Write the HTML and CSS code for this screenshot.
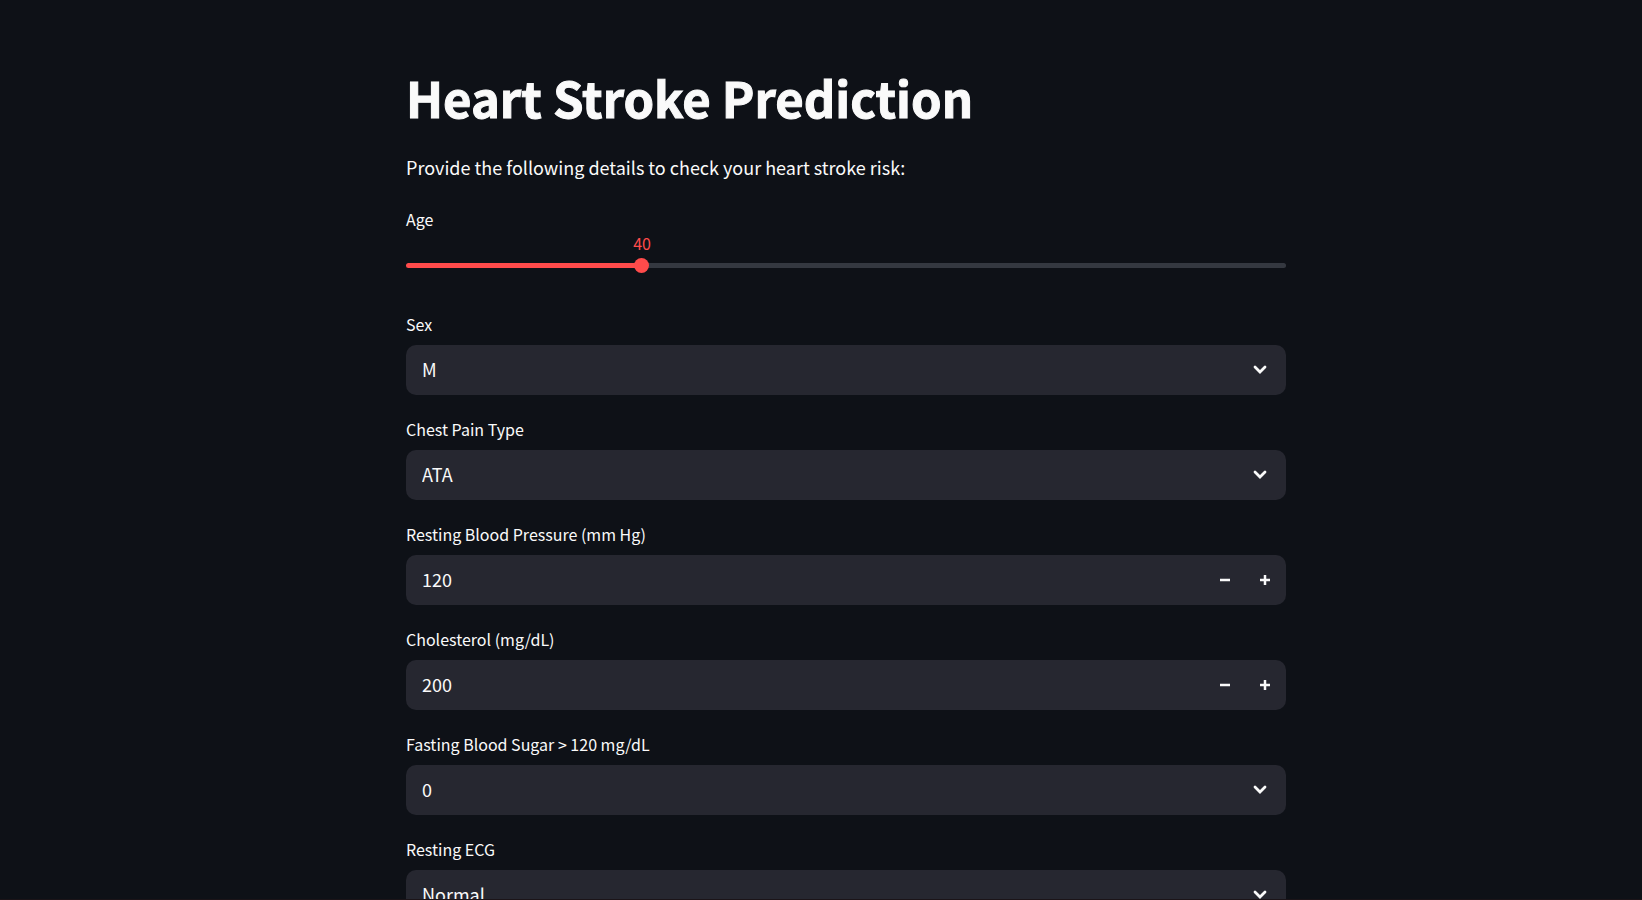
FILE: index.html
```html
<!DOCTYPE html>
<html lang="en">
<head>
<meta charset="utf-8">
<meta name="viewport" content="width=device-width, initial-scale=1">
<title>Heart Stroke Prediction</title>
<link rel="stylesheet" href="styles.css">
</head>
<body>
<svg class="sprite" aria-hidden="true">
  <symbol id="chevron" viewBox="0 0 24 24"><path d="M7 10l5 5 5-5" fill="none" stroke="currentColor" stroke-width="2.8" stroke-linecap="round" stroke-linejoin="miter"/></symbol>
  <symbol id="minus" viewBox="0 0 8 8"><path d="M0 3h8v2H0z" fill="currentColor"/></symbol>
  <symbol id="plus" viewBox="0 0 8 8"><path d="M0 3h3V0h2v3h3v2H5v3H3V5H0z" fill="currentColor"/></symbol>
</svg>
<main class="page">
  <form class="form">
    <header class="intro">
      <h1 class="title">Heart Stroke Prediction</h1>
      <p class="lead">Provide the following details to check your heart stroke risk:</p>
    </header>

    <div class="field slider-field" style="--fill: 26.83%">
      <label class="label" for="age">Age</label>
      <div class="slider">
        <output class="slider-value" for="age">40</output>
        <div class="slider-track">
          <input class="range" id="age" type="range" min="18" max="100" value="40">
        </div>
      </div>
    </div>

    <div class="field">
      <label class="label" for="sex">Sex</label>
      <div class="control">
        <select class="select" id="sex"><option>M</option><option>F</option></select>
        <svg class="chevron" aria-hidden="true"><use href="#chevron"/></svg>
      </div>
    </div>

    <div class="field">
      <label class="label" for="pain">Chest Pain Type</label>
      <div class="control">
        <select class="select" id="pain"><option>ATA</option><option>NAP</option><option>TA</option><option>ASY</option></select>
        <svg class="chevron" aria-hidden="true"><use href="#chevron"/></svg>
      </div>
    </div>

    <div class="field">
      <label class="label" for="bp">Resting Blood Pressure (mm Hg)</label>
      <div class="control">
        <input class="number" id="bp" type="number" value="120">
        <button class="step" type="button" aria-label="Decrease"><svg class="step-icon"><use href="#minus"/></svg></button>
        <button class="step" type="button" aria-label="Increase"><svg class="step-icon"><use href="#plus"/></svg></button>
      </div>
    </div>

    <div class="field">
      <label class="label" for="chol">Cholesterol (mg/dL)</label>
      <div class="control">
        <input class="number" id="chol" type="number" value="200">
        <button class="step" type="button" aria-label="Decrease"><svg class="step-icon"><use href="#minus"/></svg></button>
        <button class="step" type="button" aria-label="Increase"><svg class="step-icon"><use href="#plus"/></svg></button>
      </div>
    </div>

    <div class="field">
      <label class="label" for="sugar">Fasting Blood Sugar &gt; 120 mg/dL</label>
      <div class="control">
        <select class="select" id="sugar"><option>0</option><option>1</option></select>
        <svg class="chevron" aria-hidden="true"><use href="#chevron"/></svg>
      </div>
    </div>

    <div class="field">
      <label class="label" for="ecg">Resting ECG</label>
      <div class="control">
        <select class="select" id="ecg"><option>Normal</option><option>ST</option><option>LVH</option></select>
        <svg class="chevron" aria-hidden="true"><use href="#chevron"/></svg>
      </div>
    </div>
  </form>
</main>
</body>
</html>
```
FILE: styles.css
```css
:root {
  --bg: #0e1117;
  --surface: #262730;
  --text: #fafafa;
  --accent: #ff4b4b;
  --track: #343840;
}

* { box-sizing: border-box; }

body {
  margin: 0;
  height: 100vh;
  overflow: hidden;
  background: var(--bg);
  color: var(--text);
  font-family: "Noto Sans CJK SC", "Noto Sans", sans-serif;
  font-size: 18px;
}

.sprite { display: none; }

.page {
  height: 100%;
  overflow: hidden;
  padding: 64px 0 0 50px;
  border-bottom: 1px solid #1b1418;
}

.form {
  display: flex;
  flex-direction: column;
  gap: 19px;
  max-width: 880px;
  margin: 0 auto;
}

.title {
  margin: 0;
  font-size: 49px;
  font-weight: 700;
  line-height: 66px;
  -webkit-text-stroke: 1px currentColor;
}

.lead {
  margin: 19px 0 0;
  line-height: 36px;
}

.field {
  display: flex;
  flex-direction: column;
  gap: 6px;
}

.label {
  font-size: 16px;
  line-height: 30px;
}

.slider-field {
  gap: 0;
  height: 86px;
}

.slider-value {
  display: block;
  width: calc(var(--fill) * 2);
  color: var(--accent);
  font-size: 16px;
  line-height: 18px;
  text-align: center;
}

.slider-track {
  display: flex;
  align-items: center;
  height: 5px;
  margin-top: 11px;
  border-radius: 4px;
  background: linear-gradient(to right, var(--accent) var(--fill), var(--track) var(--fill));
}

.range {
  flex: 1;
  height: 15px;
  margin: 0 -8px;
  background: transparent;
  appearance: none;
}

.range::-webkit-slider-thumb {
  appearance: none;
  width: 15px;
  height: 15px;
  border-radius: 50%;
  background: var(--accent);
}

.control {
  position: relative;
  display: flex;
  height: 50px;
  padding-right: 1px;
  border-radius: 10px;
  background: var(--surface);
  overflow: hidden;
}

.select,
.number {
  flex: 1;
  min-width: 0;
  padding: 0 16px 3px;
  border: 0;
  background: transparent;
  color: inherit;
  font: inherit;
  appearance: none;
}

.select option { background: var(--surface); }

.number { appearance: textfield; }

.number::-webkit-inner-spin-button { appearance: none; }

.chevron {
  position: absolute;
  top: 12px;
  right: 14px;
  width: 24px;
  height: 24px;
  pointer-events: none;
}

.step {
  display: flex;
  align-items: center;
  justify-content: center;
  width: 40px;
  padding: 0;
  border: 0;
  background: transparent;
  color: inherit;
}

.step-icon {
  width: 10px;
  height: 10px;
}
```
